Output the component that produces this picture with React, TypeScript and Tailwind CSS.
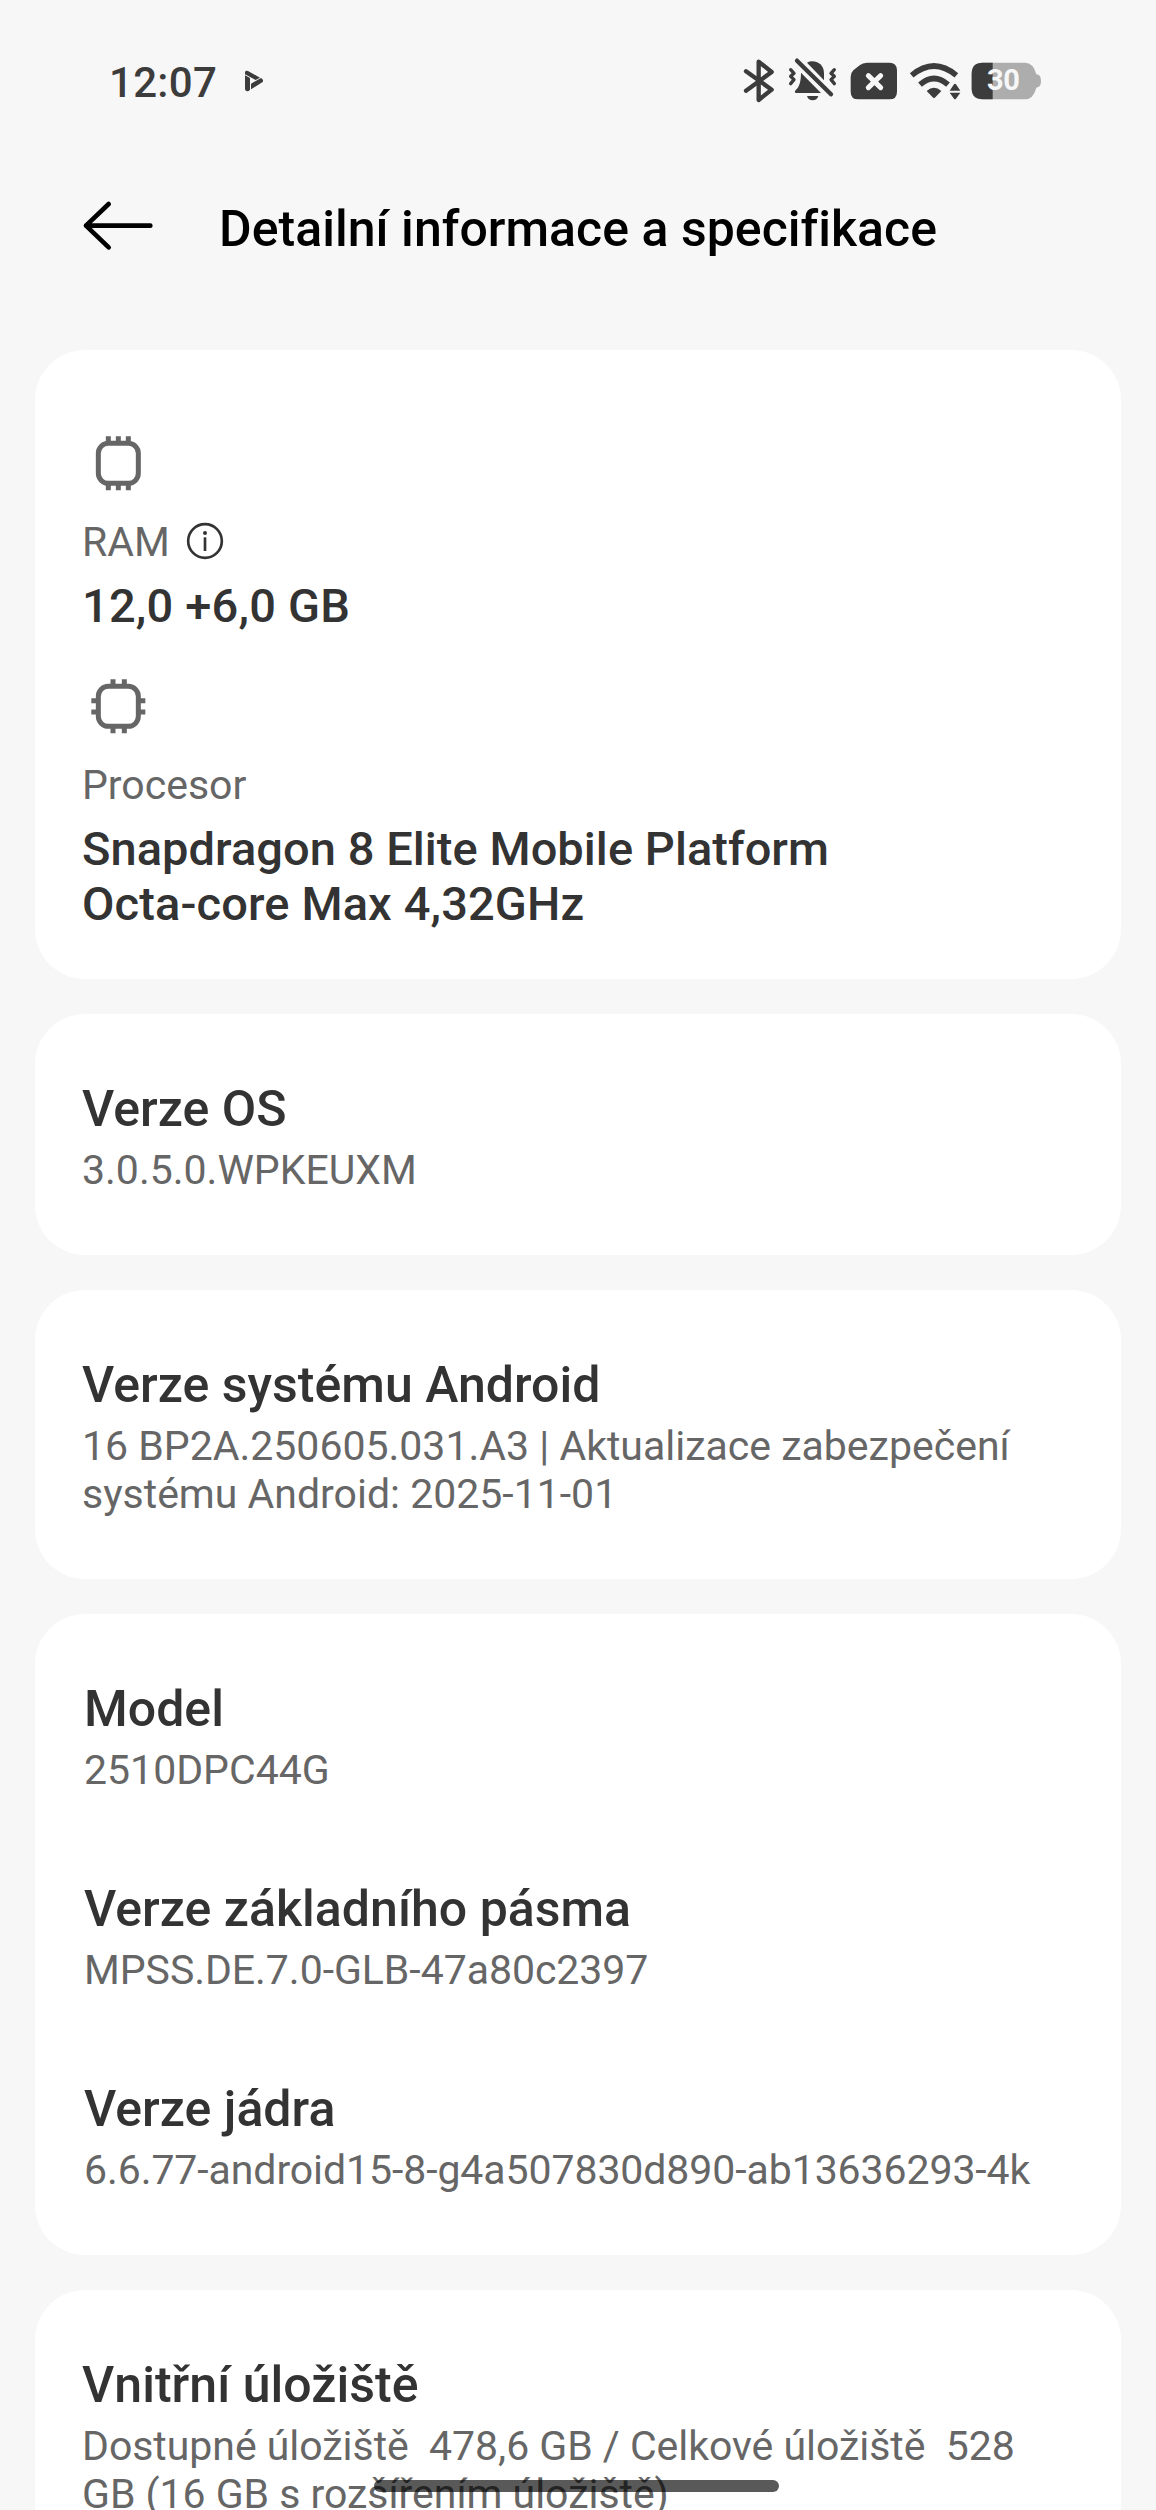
import type { ReactNode } from "react";

function Icon({ box, className, children }: { box: string; className: string; children: ReactNode }) {
  return (
    <svg viewBox={box} className={`shrink-0 ${className}`} fill="none">
      {children}
    </svg>
  );
}

function StatusBar() {
  return (
    <header className="flex h-[164px] items-start pt-[50px] pl-[109px] text-[#3c3c3c]">
      <div className="mt-[8px] w-[127px] text-[42px] leading-[49px] font-[480] tracking-[0.3px]">12:07</div>
      <Icon box="0 0 60 72" className="mt-[18px] ml-[7px] h-[24px] w-[20px]">
        <path d="M6 12Q8 6 15 9L51 29L38 36L6 19Z" fill="#3c3c3c" />
        <path d="M6 22L21 30V65Q16 71 10 69Q6 68 6 63Z" fill="#3c3c3c" />
        <path d="M24 47L54 30Q63 36 59 42L24 64Z" fill="#3c3c3c" />
      </Icon>
      <div className="ml-[479px] flex">
        <Icon box="36 0 114 180" className="mr-[5px] h-[60px] w-[38px]">
          <path d="M48 64L125 119L86 150V35L125 66L48 122" stroke="#3c3c3c" strokeWidth="13" strokeLinecap="round" strokeLinejoin="round" />
        </Icon>
        <Icon box="165 0 165 180" className="mr-[9px] h-[60px] w-[55px]">
          <path d="M231 38C251 27 282 39 282 70V91Z" fill="#3c3c3c" />
          <path d="M213 68L273 129H197C192 125 196 121 201 116C210 106 213 88 213 68Z" fill="#3c3c3c" />
          <path d="M231 138H265C262 147 257 151 248 151C239 151 234 147 231 138Z" fill="#3c3c3c" />
          <path d="M201 32L303 133" stroke="#3c3c3c" strokeWidth="13" strokeLinecap="round" />
          <path d="M182 59L192 70L182 79L192 89L182 101M313 59L303 70L313 79L303 89L313 101" stroke="#3c3c3c" strokeWidth="10" strokeLinecap="round" strokeLinejoin="round" />
        </Icon>
        <Icon box="357 0 150 180" className="mr-[9px] h-[60px] w-[50px]">
          <path d="M411 38H478Q501 38 501 61V125Q501 148 478 148H385Q362 148 362 125V80Q362 69 370 61L389 46Q398 38 411 38Z" fill="#3c3c3c" />
          <path d="M415 77L452 113M452 77L415 113" stroke="#f7f7f7" strokeWidth="15" strokeLinecap="round" />
        </Icon>
        <Icon box="534 0 162 180" className="mr-[8px] h-[60px] w-[54px]">
          <path d="M545 76Q612 20 679 76M570 104Q612 67 654 104" stroke="#3c3c3c" strokeWidth="17" />
          <path d="M590 123Q612 104 634 123L616 142Q612 147 608 142Z" fill="#3c3c3c" />
          <path d="M659 122L672 103Q675 99 678 103L691 122ZM659 128H691L678 146Q675 150 672 146Z" fill="#3c3c3c" />
        </Icon>
        <div className="relative h-[60px] w-[72px]">
          <Icon box="720 0 216 180" className="h-[60px] w-[72px]">
            <path d="M758 38H885Q910 38 919 73Q933 74 933 93Q933 112 919 113Q910 148 885 148H758Q725 148 725 115V71Q725 38 758 38Z" fill="#adadad" />
            <path d="M788 38H758Q725 38 725 71V115Q725 148 758 148H788Z" fill="#3c3c3c" />
          </Icon>
          <span className="absolute top-[13px] left-[17px] text-[29px] leading-[34px] font-bold tracking-[-0.4px] text-[#f7f7f7]">30</span>
        </div>
      </div>
    </header>
  );
}

function ChipIcon({ pins }: { pins: string }) {
  return (
    <Icon box="0 0 180 180" className="h-[60px] w-[60px]">
      <rect x="37" y="37" width="120" height="120" rx="30" stroke="#666" strokeWidth="15" />
      <path d={pins} stroke="#666" strokeWidth="15" />
    </Icon>
  );
}

function Card({ className = "", children }: { className?: string; children: ReactNode }) {
  return <section className={`shrink-0 rounded-[50px] bg-white pt-[66px] pr-[47px] pb-[61px] ${className}`}>{children}</section>;
}

function Item({ title, className = "", children }: { title: string; className?: string; children: ReactNode }) {
  return (
    <div>
      <h2 className="text-[50px] leading-[59px] font-medium tracking-[0.03px] text-[#333]">{title}</h2>
      <p className={`mt-[7px] text-[41px] leading-[48px] whitespace-pre text-[#666] ${className}`}>{children}</p>
    </div>
  );
}

export default function App() {
  return (
    <div className="relative h-[2510px] w-[1156px] overflow-hidden bg-[#f7f7f7] font-['Roboto',sans-serif]">
      <StatusBar />
      <div className="flex h-[186px] items-start pl-[82px]">
        <Icon box="0 0 216 156" className="mt-[36px] h-[52px] w-[72px]">
          <path d="M80 12L12 77L80 142M12 77H205" stroke="#000" strokeWidth="14" strokeLinecap="round" strokeLinejoin="round" />
        </Icon>
        <h1 className="mt-[36px] ml-[65px] text-[50px] leading-[59px] font-medium tracking-[0.03px] text-black">
          Detailní informace a specifikace
        </h1>
      </div>
      <main className="flex flex-col gap-[35px] px-[35px]">
        <section className="h-[629px] shrink-0 rounded-[50px] bg-white pt-[81px] pl-[47px] text-[#333]">
          <div className="ml-[4px]">
            <ChipIcon pins="M67 16V34M97 16V34M127 16V34M67 160V178M97 160V178M127 160V178" />
          </div>
          <div className="mt-[27px] flex items-start text-[41px] leading-[48px] text-[#666]">
            RAM
            <Icon box="0 0 114 114" className="mt-[4px] ml-[16px] h-[38px] w-[38px]">
              <circle cx="57" cy="57" r="50.5" stroke="#333" strokeWidth="8" />
              <circle cx="57" cy="33" r="6" fill="#333" />
              <path d="M57 46V87" stroke="#333" strokeWidth="8" />
            </Icon>
          </div>
          <p className="mt-[12px] text-[47px] leading-[55px] font-medium tracking-[0.2px]">12,0 +6,0 GB</p>
          <div className="mt-[41px] ml-[4px]">
            <ChipIcon pins="M81 16V34M115 16V34M81 160V178M115 160V178M16 80H34M16 114H34M160 80H178M160 114H178" />
          </div>
          <p className="mt-[27px] text-[41px] leading-[48px] text-[#666]">Procesor</p>
          <p className="mt-[12px] text-[47px] leading-[55px] font-medium tracking-[0.05px]">
            Snapdragon 8 Elite Mobile Platform
            <br />
            <span className="tracking-[0.13px]">Octa-core Max 4,32GHz</span>
          </p>
        </section>
        <Card className="pl-[47px]">
          <Item title="Verze OS">3.0.5.0.WPKEUXM</Item>
        </Card>
        <Card className="pl-[47px]">
          <Item title="Verze systému Android">
            {"16 BP2A.250605.031.A3 | Aktualizace zabezpečení\nsystému Android: 2025-11-01"}
          </Item>
        </Card>
        <Card className="flex flex-col gap-[86px] pl-[49px]">
          <Item title="Model">2510DPC44G</Item>
          <Item title="Verze základního pásma" className="tracking-[-0.04px]">MPSS.DE.7.0-GLB-47a80c2397</Item>
          <Item title="Verze jádra" className="tracking-[-0.08px]">6.6.77-android15-8-g4a507830d890-ab13636293-4k</Item>
        </Card>
        <Card className="pl-[47px]">
          <Item title="Vnitřní úložiště" className="tracking-[-0.03px]">
            {"Dostupné úložiště  478,6 GB / Celkové úložiště  528\nGB (16 GB s rozšířením úložiště)"}
          </Item>
        </Card>
      </main>
      <div className="absolute top-[2480px] left-[374px] h-[12px] w-[405px] rounded-full bg-black/65" />
    </div>
  );
}
